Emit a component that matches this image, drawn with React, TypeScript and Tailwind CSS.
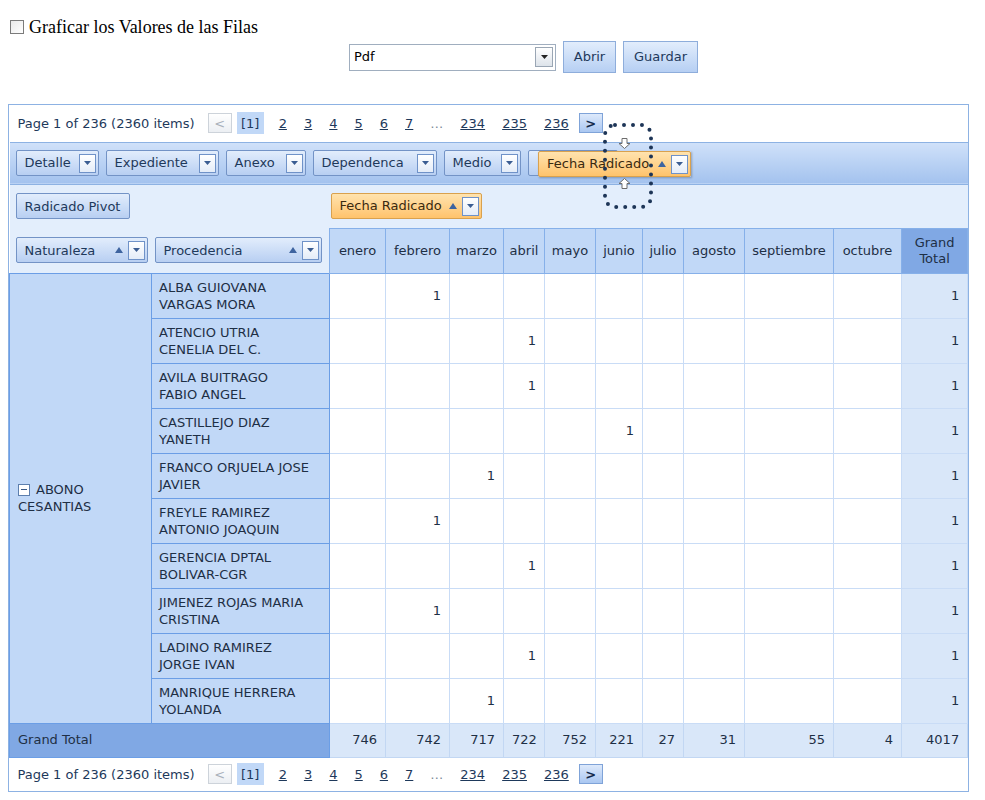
import React from "react";

const months = ["enero", "febrero", "marzo", "abril", "mayo", "junio", "julio", "agosto", "septiembre", "octubre"];
const monthWidths = [56, 64, 54, 41, 51, 47, 41, 61, 89, 68];

// month index where the single "1" sits for each row
const rows: { name: [string, string]; col: number }[] = [
  { name: ["ALBA GUIOVANA", "VARGAS MORA"], col: 1 },
  { name: ["ATENCIO UTRIA", "CENELIA DEL C."], col: 3 },
  { name: ["AVILA BUITRAGO", "FABIO ANGEL"], col: 3 },
  { name: ["CASTILLEJO DIAZ", "YANETH"], col: 5 },
  { name: ["FRANCO ORJUELA JOSE", "JAVIER"], col: 2 },
  { name: ["FREYLE RAMIREZ", "ANTONIO JOAQUIN"], col: 1 },
  { name: ["GERENCIA DPTAL", "BOLIVAR-CGR"], col: 3 },
  { name: ["JIMENEZ ROJAS MARIA", "CRISTINA"], col: 1 },
  { name: ["LADINO RAMIREZ", "JORGE IVAN"], col: 3 },
  { name: ["MANRIQUE HERRERA", "YOLANDA"], col: 2 },
];

const totals = ["746", "742", "717", "722", "752", "221", "27", "31", "55", "4"];

function DropBox() {
  return (
    <span className="flex h-[19px] w-[17px] shrink-0 items-center justify-center border border-[#6f92c8] bg-gradient-to-b from-white to-[#e4ecf8]">
      <svg width="7" height="4" viewBox="0 0 7 4">
        <path d="M0 0h7L3.5 4z" fill="#3b5d92" />
      </svg>
    </span>
  );
}

function SortUp() {
  return (
    <svg width="8" height="6" viewBox="0 0 8 6" className="shrink-0">
      <path d="M4 0l4 6H0z" fill="#3e64a0" />
    </svg>
  );
}

function FieldButton({
  label,
  w,
  sort,
  drop = true,
  orange,
}: {
  label: string;
  w: number;
  sort?: boolean;
  drop?: boolean;
  orange?: boolean;
}) {
  return (
    <div
      style={{ width: w }}
      className={
        "flex h-[26px] shrink-0 items-center gap-[5px] rounded-[2px] border pl-[8px] pr-[2px] text-[13px] " +
        (orange
          ? "border-[#d9a14e] bg-gradient-to-b from-[#ffe3ae] to-[#ffc36b] text-[#3a2a10]"
          : "border-[#7393c6] bg-gradient-to-b from-[#e2edfc] to-[#b8cff2] text-[#1e395b]")
      }
    >
      <span className="flex-1 whitespace-nowrap">{label}</span>
      {sort && <SortUp />}
      {drop && <DropBox />}
    </div>
  );
}

function Pager() {
  const links = ["2", "3", "4", "5", "6", "7"];
  return (
    <div className="flex h-full items-center pl-[8px] text-[13px] text-[#1e395b]">
      <span>Page 1 of 236 (2360 items)</span>
      <span className="ml-[13px] flex h-[20px] w-[24px] items-center justify-center border border-[#cdd3da] bg-gradient-to-b from-white to-[#eceff3] text-[#a8b0ba]">
        &lt;
      </span>
      <span className="ml-[5px] flex h-[22px] w-[27px] items-center justify-center bg-[#c1d8f7]">[1]</span>
      <span className="ml-[15px] flex items-center gap-[17px]">
        {links.map((l) => (
          <span key={l} className="underline">
            {l}
          </span>
        ))}
        <span className="text-[#7d8a99]">…</span>
        <span className="underline">234</span>
        <span className="underline">235</span>
        <span className="underline">236</span>
      </span>
      <span className="ml-[10px] flex h-[20px] w-[24px] items-center justify-center border border-[#7fa3d8] bg-gradient-to-b from-[#dde9fb] to-[#aac7f1] font-bold text-[#13294a]">
        &gt;
      </span>
    </div>
  );
}

function DragArrow({ up }: { up?: boolean }) {
  return (
    <svg width="13" height="11" viewBox="0 0 13 11">
      <path
        d={up ? "M6.5 0.5L12 5.5H9V10.5H4V5.5H1z" : "M6.5 10.5L12 5.5H9V0.5H4V5.5H1z"}
        fill="white"
        stroke="#6c6c6c"
        strokeWidth="1"
      />
    </svg>
  );
}

export default function App() {
  return (
    <div className="min-h-[800px] bg-white" style={{ fontFamily: "'DejaVu Sans', Verdana, sans-serif" }}>
      <div className="flex items-center gap-[5px] pl-[10px] pt-[16px]">
        <span className="h-[14px] w-[14px] border border-[#7b7b7b] bg-gradient-to-br from-[#e9e9e9] to-white" />
        <span className="text-[18px] leading-[22px] text-black" style={{ fontFamily: "'Liberation Serif', serif" }}>
          Graficar los Valores de las Filas
        </span>
      </div>

      <div className="mt-[3px] flex items-center pl-[349px]">
        <div className="flex h-[27px] w-[207px] items-center justify-between border border-[#a0aebf] bg-white pl-[4px] pr-[2px] text-[13px] text-black">
          <span>Pdf</span>
          <span className="flex h-[20px] w-[18px] items-center justify-center border border-[#9aa6b4] bg-gradient-to-b from-white to-[#dde3ea]">
            <svg width="7" height="4" viewBox="0 0 7 4">
              <path d="M0 0h7L3.5 4z" fill="#222" />
            </svg>
          </span>
        </div>
        <button className="ml-[7px] h-[32px] w-[53px] border border-[#8eaddb] bg-gradient-to-b from-[#e2edfc] to-[#b6cff3] text-[13px] text-[#1e395b]">
          Abrir
        </button>
        <button className="ml-[7px] h-[32px] w-[75px] border border-[#8eaddb] bg-gradient-to-b from-[#e2edfc] to-[#b6cff3] text-[13px] text-[#1e395b]">
          Guardar
        </button>
      </div>

      <div className="relative ml-[8px] mt-[31px] w-[961px] border border-[#8db2e3] text-[13px] text-[#1e2f45]">
        <table className="w-full table-fixed border-collapse">
          <colgroup>
            <col style={{ width: 142 }} />
            <col style={{ width: 178 }} />
            {monthWidths.map((w, i) => (
              <col key={i} style={{ width: w }} />
            ))}
            <col style={{ width: 66 }} />
          </colgroup>
          <tbody>
            <tr className="h-[37px]">
              <td colSpan={13} className="border-b border-[#8db2e3] bg-white p-0">
                <Pager />
              </td>
            </tr>
            <tr className="h-[42px]">
              <td colSpan={13} className="bg-gradient-to-b from-[#d0e1f9] to-[#a3c2ee] p-0">
                <div className="flex items-center gap-[7px] pl-[6px]">
                  <FieldButton label="Detalle" w={83} />
                  <FieldButton label="Expediente" w={113} />
                  <FieldButton label="Anexo" w={80} />
                  <FieldButton label="Dependenca" w={124} />
                  <FieldButton label="Medio" w={77} />
                  <FieldButton label="" w={90} drop={false} />
                </div>
              </td>
            </tr>
            <tr className="h-[44px] bg-[#e3eefc]">
              <td colSpan={2} className="border-t border-[#8db2e3] p-0">
                <div className="pl-[6px]">
                  <FieldButton label="Radicado Pivot" w={114} drop={false} />
                </div>
              </td>
              <td colSpan={11} className="border-t border-[#8db2e3] p-0">
                <div className="pl-[1px]">
                  <FieldButton label="Fecha Radicado" w={151} sort orange />
                </div>
              </td>
            </tr>
            <tr className="h-[45px]">
              <td colSpan={2} className="bg-[#e3eefc] p-0">
                <div className="flex items-center gap-[7px] pl-[6px]">
                  <FieldButton label="Naturaleza" w={132} sort />
                  <FieldButton label="Procedencia" w={167} sort />
                </div>
              </td>
              {months.map((m) => (
                <td key={m} className="border border-[#86b0e9] bg-[#c1d8f7] p-0 text-center">
                  {m}
                </td>
              ))}
              <td className="border border-[#86b0e9] bg-[#80a8e4] p-0 text-center leading-[16px]">
                Grand
                <br />
                Total
              </td>
            </tr>
            {rows.map((r, i) => (
              <tr key={i} className="h-[45px]">
                {i === 0 && (
                  <td rowSpan={10} className="border border-[#6b9ee6] bg-[#c1d8f7] px-[8px] align-middle leading-[17px]">
                    <div className="flex items-center gap-[6px]">
                      <span className="flex h-[12px] w-[12px] items-center justify-center border border-[#5d7fae] bg-white">
                        <span className="h-[1px] w-[6px] bg-[#3b5a86]" />
                      </span>
                      <span>ABONO</span>
                    </div>
                    <div>CESANTIAS</div>
                  </td>
                )}
                <td className="border border-[#6b9ee6] bg-[#c1d8f7] px-[7px] leading-[17px]">
                  {r.name[0]}
                  <br />
                  {r.name[1]}
                </td>
                {months.map((m, j) => (
                  <td key={m} className="border border-[#c9dcf6] bg-white px-[8px] text-right">
                    {j === r.col ? "1" : ""}
                  </td>
                ))}
                <td className="border border-[#c9dcf6] bg-[#d9e7f9] px-[8px] text-right">1</td>
              </tr>
            ))}
            <tr className="h-[34px]">
              <td colSpan={2} className="border border-[#6b9ee6] bg-[#80a8e4] px-[8px]">
                Grand Total
              </td>
              {totals.map((t, j) => (
                <td key={j} className="border border-[#c2d7f3] bg-[#d9e7f9] px-[8px] text-right">
                  {t}
                </td>
              ))}
              <td className="border border-[#c2d7f3] bg-[#d9e7f9] px-[8px] text-right">4017</td>
            </tr>
            <tr className="h-[34px]">
              <td colSpan={13} className="border-t border-[#8db2e3] bg-white p-0">
                <Pager />
              </td>
            </tr>
          </tbody>
        </table>

        {/* field being dragged */}
        <div className="absolute left-[529px] top-[46px]">
          <div className="shadow-[1px_1px_2px_rgba(0,0,0,0.25)]">
            <FieldButton label="Fecha Radicado" w={153} sort orange />
          </div>
        </div>
        <div className="absolute left-[609px] top-[33px]">
          <DragArrow />
        </div>
        <div className="absolute left-[609px] top-[73px]">
          <DragArrow up />
        </div>
        <svg className="absolute left-[592px] top-[16px]" width="56" height="92" viewBox="0 0 56 92">
          <rect
            x="4"
            y="4"
            width="46"
            height="82"
            rx="10"
            fill="none"
            stroke="#1d3557"
            strokeWidth="4"
            strokeLinecap="round"
            strokeDasharray="0 9"
          />
        </svg>
      </div>
    </div>
  );
}
